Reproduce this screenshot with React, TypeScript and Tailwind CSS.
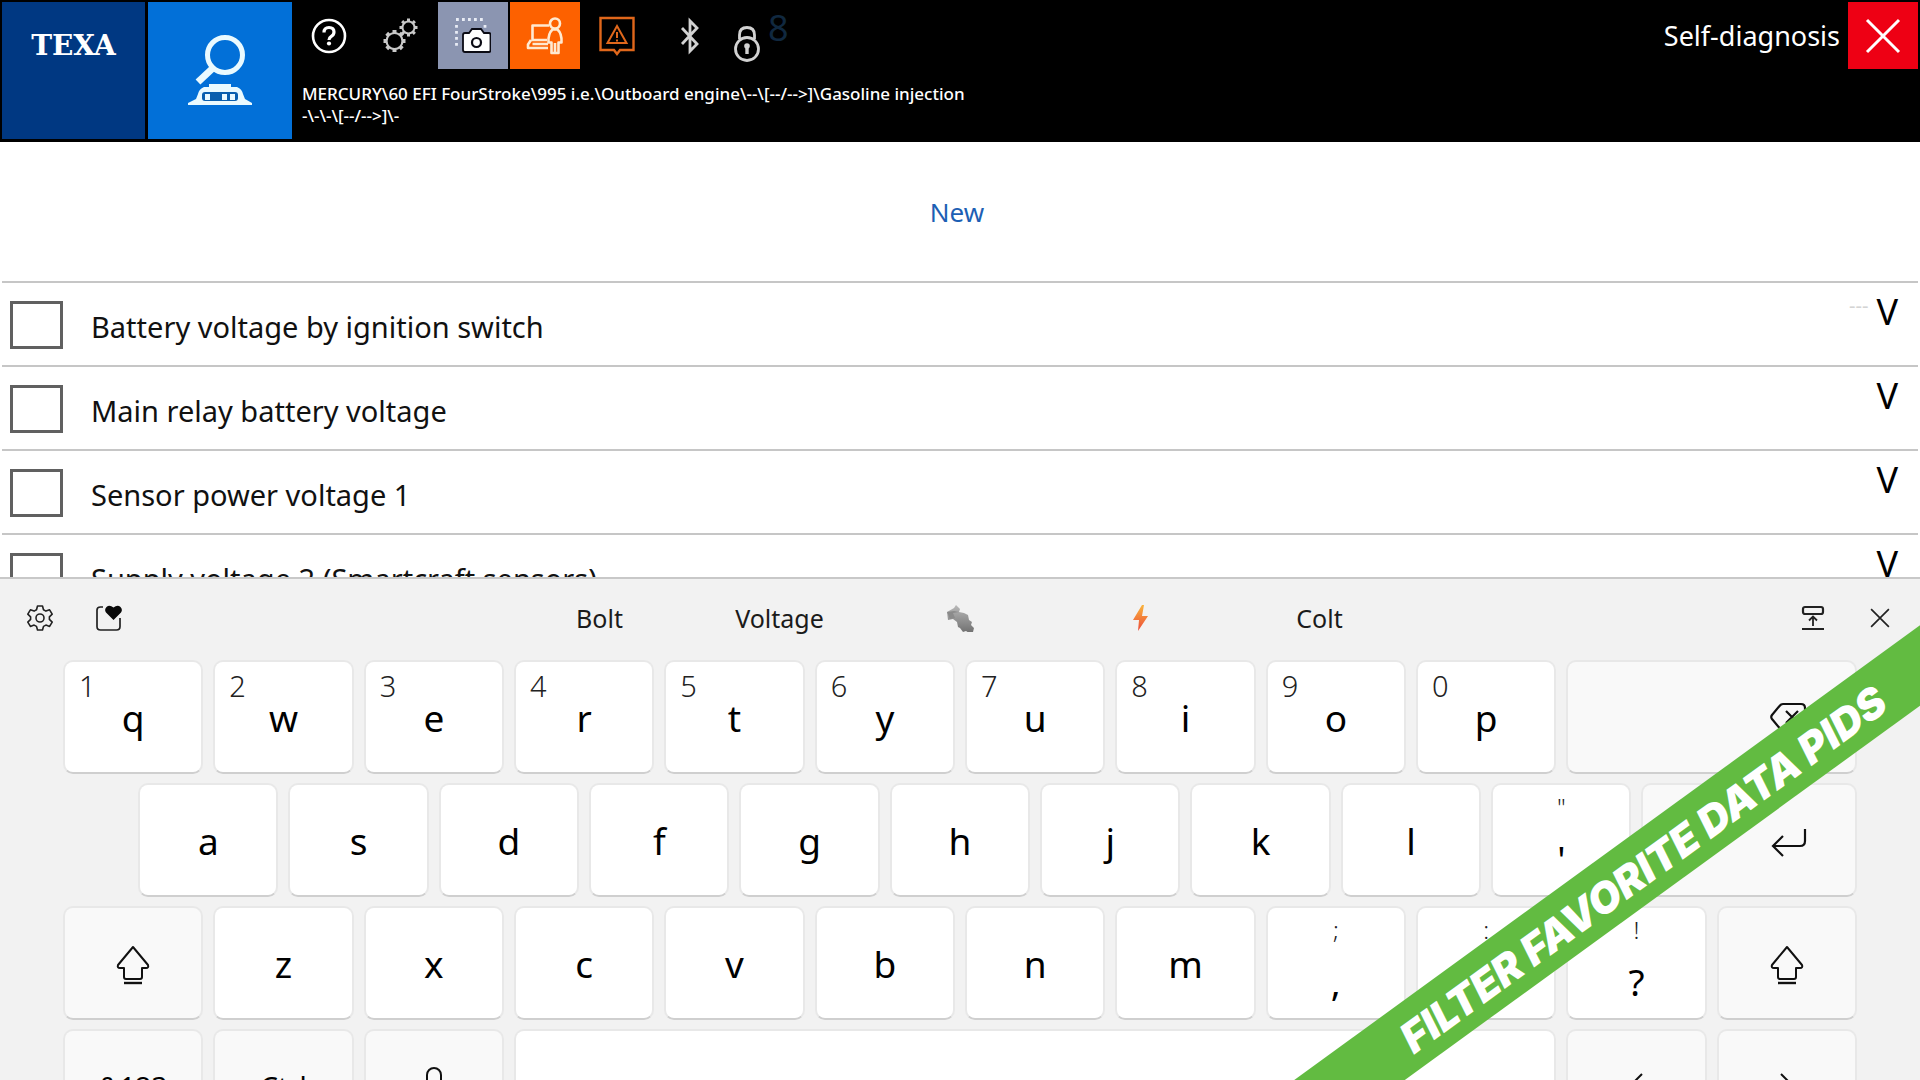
import { ReactNode } from "react";

const UI = "font-['Noto_Sans',sans-serif]";

const pids = [
  { name: "Battery voltage by ignition switch", unit: "V", pending: true },
  { name: "Main relay battery voltage", unit: "V" },
  { name: "Sensor power voltage 1", unit: "V" },
  { name: "Supply voltage 2 (Smartcraft sensors)", unit: "V" },
];

function Magnifier() {
  return (
    <svg viewBox="0 0 64 72" className="h-[72px] w-16" aria-hidden="true">
      <circle cx="37" cy="20" r="17.5" fill="none" stroke="#eafaff" strokeWidth="5" />
      <path d="M25 33 10 47" stroke="#eafaff" strokeWidth="7" />
      <path d="M21 49h22v3h6q5 2 6 7l2 5 7 4v2H0v-2l8-4 2-5q1-5 6-7h5z" fill="#eafaff" />
      <rect x="14" y="57" width="36" height="9" rx="3" fill="#0a5fae" />
      <path d="M17 59h5v6h-5zM34 59h5v6h-5zM42 59h5v6h-5z" fill="#eafaff" />
    </svg>
  );
}

function Help() {
  return (
    <svg viewBox="0 0 36 36" className="size-9" fill="none" stroke="#fff" aria-hidden="true">
      <circle cx="18" cy="18" r="16" strokeWidth="2.6" />
      <path d="M13 14.500q0-5 5-5t5 4.500q0 3-3 4.600-2 1.200-2 3.400" strokeWidth="3.200" />
      <circle cx="18" cy="25.500" r="2.100" fill="#fff" stroke="none" />
    </svg>
  );
}

function teeth(cx: number, cy: number, r: number, n: number) {
  return Array.from({ length: n }, (_, i) => {
    const a = (i * 2 * Math.PI) / n;
    const c = Math.cos(a);
    const s = Math.sin(a);
    return `M${cx + c * r} ${cy + s * r}L${cx + c * (r + 3)} ${cy + s * (r + 3)}`;
  }).join("");
}

function Gears() {
  return (
    <svg viewBox="0 0 36 36" className="mr-1 size-9" fill="none" stroke="#c9c9c9" aria-hidden="true">
      <circle cx="12.500" cy="23" r="8" strokeWidth="2.200" />
      <path d={teeth(12.5, 23, 8, 8)} strokeWidth="4" />
      <circle cx="26.500" cy="9.500" r="6" strokeWidth="2" />
      <path d={teeth(26.5, 9.5, 6, 8)} strokeWidth="3" />
    </svg>
  );
}

function Camera() {
  return (
    <svg viewBox="0 0 36 36" className="size-9" aria-hidden="true">
      <path d="M1 1.500h30M1.500 7v22M30 7v6" fill="none" stroke="#e8ecf5" strokeWidth="2.800" strokeDasharray="2.800 3.200" />
      <path d="M8 17q0-2 2-2h4l3-4h9l3 4h5q1.500 0 1.500 2v15q0 2-1.500 2H10q-2 0-2-2z" fill="#fff" stroke="#0b0b14" strokeWidth="1.800" />
      <circle cx="21.500" cy="24.500" r="4.500" fill="none" stroke="#0b0b14" strokeWidth="2.200" />
    </svg>
  );
}

function LaptopUser() {
  return (
    <svg viewBox="0 0 38 38" className="size-[38px]" fill="none" stroke="#ffe9d0" strokeWidth="2.600" strokeLinejoin="round" aria-hidden="true">
      <path d="M23 8.500H6.500v14.500H21M5 23l-3 4.500V31h20M6.500 27H22" />
      <circle cx="29" cy="6.500" r="5" />
      <path d="M26.500 12.500h5q4.500 4 4 13h-3V36h-7V25.500h-3q-.500-9 4-13zM29 26v10" />
    </svg>
  );
}

function AlertBox() {
  return (
    <svg viewBox="0 0 36 40" className="h-10 w-9" fill="none" stroke="#e0671b" aria-hidden="true">
      <path d="M1.500 2h33v32H21l-3 4-3-4H1.500z" strokeWidth="2.400" />
      <path d="M18 10 27.500 27h-19zM18 16v6M18 23.500v2" strokeWidth="2" />
    </svg>
  );
}

function BluetoothMark() {
  return (
    <svg viewBox="0 0 20 38" className="h-[38px] w-5" fill="none" stroke="#d2d2d2" strokeWidth="2.800" aria-hidden="true">
      <path d="m2 11 15 16-7 7V4l7 7L2 27" />
    </svg>
  );
}

function Lock() {
  return (
    <svg viewBox="0 0 28 40" className="h-10 w-7" fill="none" stroke="#d2d2d2" strokeWidth="2.800" aria-hidden="true">
      <circle cx="14" cy="26" r="11.500" />
      <path d="M6.500 16v-4q0-7.500 7.500-7.500t7.500 7.500v4" />
      <path d="M14 22v9" strokeWidth="3.400" />
      <circle cx="14" cy="23" r="2.800" fill="#d2d2d2" stroke="none" />
    </svg>
  );
}

function Cross({ className }: { className: string }) {
  return (
    <svg viewBox="0 0 36 36" className={className} fill="none" aria-hidden="true">
      <path d="m2 2 32 32M34 2 2 34" />
    </svg>
  );
}

function Cog() {
  return (
    <svg viewBox="0 0 28 28" className="size-7" fill="none" stroke="#222" strokeWidth="1.600" strokeLinejoin="round" aria-hidden="true">
      <path d="M11.500 2h5l1 3.800 2.400 1.300 3.700-1.300 2.600 4.300-2.800 2.700v2.600l2.800 2.700-2.600 4.300-3.700-1.300-2.400 1.300-1 3.600h-5l-1-3.600-2.400-1.300-3.700 1.300-2.600-4.300 2.800-2.700v-2.600L1.800 10.100l2.600-4.300 3.700 1.300 2.400-1.300z" />
      <circle cx="14" cy="14" r="4" />
    </svg>
  );
}

function StickerHeart() {
  return (
    <svg viewBox="0 0 28 28" className="size-7" aria-hidden="true">
      <path d="M9 3H6.500Q3 3 3 6v16.500Q3 26 6.500 26h16q3.500 0 3.500-3.500V14" fill="none" stroke="#222" strokeWidth="1.700" />
      <path d="M19.500 16 12 8.500q-2-3 .500-5.500 3-2.500 7 .500 4-3 7-.500 2.500 2.500.500 5.500z" fill="#0a0a0a" />
    </svg>
  );
}

function NutBolt() {
  return (
    <svg viewBox="0 0 28 28" className="size-7" aria-hidden="true">
      <defs>
        <linearGradient id="steel" x1="0" y1="0" x2="0" y2="1">
          <stop offset="0" stopColor="#b9b9b9" />
          <stop offset="1" stopColor="#707070" />
        </linearGradient>
      </defs>
      <path d="m1 8 7-4 2-3 4 4-1 3 5 1 4 2 1 5 3 2-1 3 3 3-1 4-4 1-3-2-3 1-3-4-2-1-1-5-4-3-5 1z" fill="url(#steel)" />
      <path d="m1 8 3 7 5-1-2-5 6-1-5-1z" fill="#8b8b8b" />
    </svg>
  );
}

function Lightning() {
  return (
    <svg viewBox="0 0 18 28" className="h-7 w-[18px]" aria-hidden="true">
      <defs>
        <linearGradient id="spark" x1="0" y1="0" x2="0" y2="1">
          <stop offset="0" stopColor="#f9b43c" />
          <stop offset="1" stopColor="#ec4a3a" />
        </linearGradient>
      </defs>
      <path d="M11 1 2 16h6L7 27l10-15h-6l2-11z" fill="url(#spark)" />
    </svg>
  );
}

function Dock() {
  return (
    <svg viewBox="0 0 24 26" className="h-[26px] w-6" fill="none" stroke="#222" strokeWidth="1.800" aria-hidden="true">
      <rect x="2" y="2" width="20" height="7" rx="2" strokeWidth="2.200" />
      <path d="M12 21v-9M8 15.500l4-4 4 4M1 24h22" />
    </svg>
  );
}

function Shift() {
  return (
    <svg viewBox="0 0 34 40" className="mt-1 h-10 w-[34px]" fill="none" stroke="#111" strokeWidth="2" strokeLinejoin="round" aria-hidden="true">
      <path d="M17 2 32 20q1 3-2 3h-4v9q0 2-2 2H10q-2 0-2-2v-9H4q-3 0-2-3z" />
      <path d="M8 38h18" strokeWidth="2.400" />
    </svg>
  );
}

function Backspace() {
  return (
    <svg viewBox="0 0 38 30" className="h-[30px] w-[38px]" fill="none" stroke="#111" strokeWidth="2.200" strokeLinejoin="round" aria-hidden="true">
      <path d="M14 2h18q4 0 4 4v18q0 4-4 4H14q-2 0-3.500-2L3 17q-1.500-2 0-4l7.500-9Q12 2 14 2zM17 9l12 12M29 9 17 21" />
    </svg>
  );
}

function Enter() {
  return (
    <svg viewBox="0 0 36 30" className="h-[30px] w-9" fill="none" stroke="#111" strokeWidth="2.200" aria-hidden="true">
      <path d="M34 2v12q0 5-5 5H2M12 9 2 19l10 10" />
    </svg>
  );
}

function Mic() {
  return (
    <svg viewBox="0 0 24 40" className="h-10 w-6" fill="none" stroke="#111" strokeWidth="2" aria-hidden="true">
      <rect x="5" y="2" width="14" height="24" rx="7" />
      <path d="M1 20q0 11 11 11t11-11M12 31v8" />
    </svg>
  );
}

function Chevron({ right = false }: { right?: boolean }) {
  return (
    <svg viewBox="0 0 16 28" className="h-7 w-4" fill="none" stroke="#111" strokeWidth="2" aria-hidden="true">
      <path d={right ? "m2 2 12 12L2 26" : "M14 2 2 14l12 12"} />
    </svg>
  );
}

const keyBase =
  "mx-[5px] flex h-[114px] rounded-[10px] border-2 border-[#e8e8e8] border-b-[#cfcfcf] text-black";

function LetterKey({ label, digit }: { label: string; digit?: string }) {
  return (
    <button className={`${keyBase} relative col-span-2 items-center justify-center bg-white pt-0.5 text-[37px] leading-[48px]`}>
      {digit && <span className="absolute top-2 left-3.5 text-[29px] leading-8 font-light text-[#222]">{digit}</span>}
      {label}
    </button>
  );
}

function DualKey({ upper, lower }: { upper: string; lower: string }) {
  return (
    <button className={`${keyBase} col-span-2 flex-col items-center justify-between bg-white pt-1.5 pb-2`}>
      <span className="text-[24px] leading-8 font-light text-[#222]">{upper}</span>
      <span className="text-[37px] leading-[56px]">{lower}</span>
    </button>
  );
}

function FnKey({ name, children }: { name: string; children: ReactNode }) {
  return (
    <button aria-label={name} className={`${keyBase} col-span-2 items-center justify-center bg-[#f9f9f9] text-[28px] leading-8`}>
      {children}
    </button>
  );
}

function Header() {
  return (
    <header className="flex h-[142px] shrink-0 bg-black px-[2px] pt-0.5 pb-[3px] text-white">
      <button className="mr-[3px] flex w-[143px] items-start justify-center bg-[#003882] pt-7 font-['DejaVu_Serif',serif] text-[28px] leading-8 font-bold">
        TEXA
      </button>
      <button aria-label="Diagnosis" className="flex w-36 items-center justify-center bg-[#0270d8]">
        <Magnifier />
      </button>
      <div className="flex min-w-0 flex-1 flex-col">
        <div className="flex h-[67px]">
          <nav className="flex items-center">
            <button aria-label="Help" className="flex w-[73px] justify-center"><Help /></button>
            <button aria-label="Settings" className="flex w-[73px] justify-center"><Gears /></button>
            <button aria-label="Screenshot" className="mr-0.5 flex h-[67px] w-[70px] items-center justify-center bg-[#8b95b1]"><Camera /></button>
            <button aria-label="Remote support" className="flex h-[67px] w-[70px] items-center justify-center bg-[#fd6100]"><LaptopUser /></button>
            <button aria-label="Warnings" className="flex w-[73px] justify-center"><AlertBox /></button>
            <button aria-label="Bluetooth" className="flex w-[73px] justify-center"><BluetoothMark /></button>
            <button aria-label="Lock" className="flex w-[42px] justify-center pt-3.5"><Lock /></button>
            <span className="mb-4 text-[36px] leading-10 text-[#10283f]">8</span>
          </nav>
          <div className="ml-auto flex items-center gap-2">
            <h1 className="text-[27px] leading-9">Self-diagnosis</h1>
            <button aria-label="Close" className="flex h-[67px] w-[70px] items-center justify-center bg-[#ee0014]">
              <Cross className="size-9 stroke-white stroke-[3]" />
            </button>
          </div>
        </div>
        <p className="pt-[14px] pl-2.5 text-[17px] leading-[22px] font-medium">
          MERCURY\60 EFI FourStroke\995 i.e.\Outboard engine\--\[--/--&gt;]\Gasoline injection
          <br />
          -\-\-\[--/--&gt;]\-
        </p>
      </div>
    </header>
  );
}

function PidList() {
  return (
    <main className="min-h-0 flex-1 overflow-hidden bg-white">
      <div className="flex h-[139px] items-center justify-center pr-1.5">
        <a href="#new" className="text-[26px] leading-9 text-[#1d5fb4]">New</a>
      </div>
      <ul>
        {pids.map((p, i) => (
          <li key={p.name} className="mx-[2px] flex h-[84px] items-start border-t-2 border-[#c6c6c6]">
            <input id={`pid-${i}`} type="checkbox" className="mt-[18px] ml-2 h-12 w-[53px] appearance-none border-[3px] border-[#606060] bg-white" />
            <label htmlFor={`pid-${i}`} className="mt-6 ml-7 text-[29px] leading-10 text-[#111]">{p.name}</label>
            <span className="mt-[7px] mr-5 ml-auto flex items-start gap-2 text-[36px] leading-[44px] text-black">
              {p.pending && <span className="text-xl leading-8 text-[#d4d4d4]">---</span>}
              {p.unit}
            </span>
          </li>
        ))}
      </ul>
    </main>
  );
}

function Keyboard() {
  return (
    <section aria-label="Touch keyboard" className="h-[503px] shrink-0 overflow-hidden border-t-2 border-[#c8c8c8] bg-[#f2f2f2]">
      <div className="flex h-[81px] items-center justify-between pr-[30px] pb-1 pl-[26px]">
        <div className="flex gap-10">
          <button aria-label="Keyboard settings"><Cog /></button>
          <button aria-label="Stickers"><StickerHeart /></button>
        </div>
        <div className="mr-1 grid w-[900px] grid-cols-5 text-[25px] leading-8 text-[#1b1b1b]">
          <button>Bolt</button>
          <button>Voltage</button>
          <button aria-label="Nut and bolt" className="flex items-center justify-center"><NutBolt /></button>
          <button aria-label="Lightning" className="flex items-center justify-center"><Lightning /></button>
          <button>Colt</button>
        </div>
        <div className="flex items-center gap-[45px]">
          <button aria-label="Dock keyboard"><Dock /></button>
          <button aria-label="Close keyboard"><Cross className="size-5 stroke-[#222] stroke-[3]" /></button>
        </div>
      </div>
      <div className="grid grid-cols-[repeat(24,minmax(0,1fr))] gap-y-[9px] px-[58px]">
        {"qwertyuiop".split("").map((c, i) => (
          <LetterKey key={c} label={c} digit={"1234567890"[i]} />
        ))}
        <button aria-label="Backspace" className={`${keyBase} col-span-4 items-center justify-end bg-[#f9f9f9] pr-12`}>
          <Backspace />
        </button>
        <span />
        {"asdfghjkl".split("").map((c) => (
          <LetterKey key={c} label={c} />
        ))}
        <DualKey upper={'"'} lower="'" />
        <button aria-label="Enter" className={`${keyBase} col-span-3 items-center justify-end bg-[#f9f9f9] pt-1 pr-12`}>
          <Enter />
        </button>
        <FnKey name="Left shift"><Shift /></FnKey>
        {"zxcvbnm".split("").map((c) => (
          <LetterKey key={c} label={c} />
        ))}
        <DualKey upper=";" lower="," />
        <DualKey upper=":" lower="." />
        <DualKey upper="!" lower="?" />
        <FnKey name="Right shift"><Shift /></FnKey>
        <FnKey name="Symbols">&amp;123</FnKey>
        <FnKey name="Control">Ctrl</FnKey>
        <FnKey name="Dictate"><Mic /></FnKey>
        <button aria-label="Space" className={`${keyBase} col-span-14 bg-white`} />
        <FnKey name="Move left"><Chevron /></FnKey>
        <FnKey name="Move right"><Chevron right /></FnKey>
      </div>
    </section>
  );
}

export default function App() {
  return (
    <div className={`relative flex h-screen flex-col overflow-hidden ${UI}`}>
      <Header />
      <PidList />
      <Keyboard />
      <div className="absolute right-[-222px] bottom-[180px] flex h-[65px] w-[1000px] -rotate-36 items-center justify-center bg-[#62bb41] pt-1 font-['Inter',sans-serif] text-[42px] leading-none font-black whitespace-nowrap text-white italic">
        FILTER FAVORITE DATA PIDS
      </div>
    </div>
  );
}
